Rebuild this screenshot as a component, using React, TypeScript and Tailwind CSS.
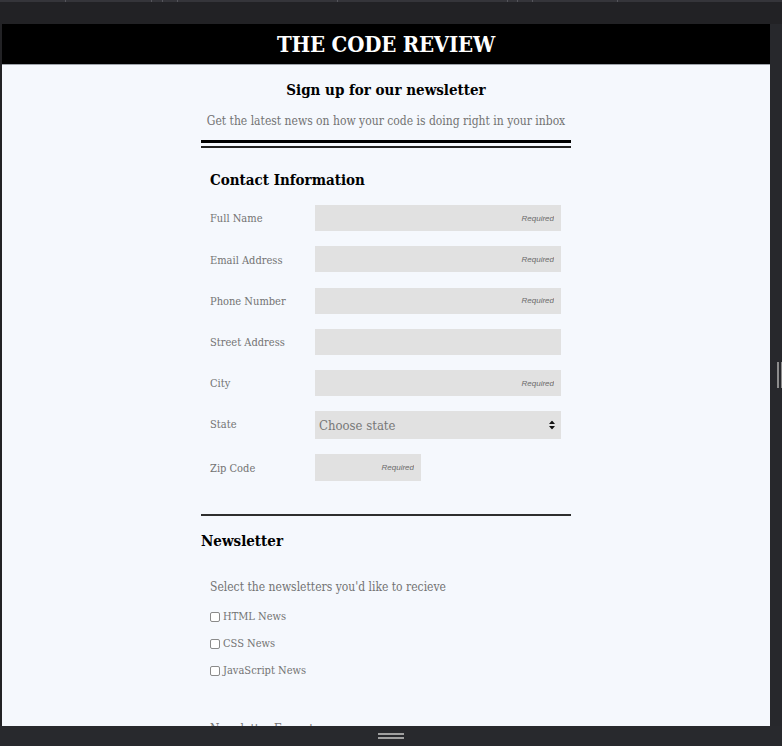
import React from 'react'

const contactFields = [
  { label: 'Full Name', required: true },
  { label: 'Email Address', required: true },
  { label: 'Phone Number', required: true },
  { label: 'Street Address', required: false },
  { label: 'City', required: true },
]

const newsletters = ['HTML News', 'CSS News', 'JavaScript News']

const SortArrows: React.FC = () => (
  <svg width="6" height="9" viewBox="0 0 6 9" className="pointer-events-none absolute right-[6px] top-1/2 -translate-y-1/2">
    <path d="M3 0 L6 3.6 L0 3.6 Z" fill="#111" />
    <path d="M3 9 L6 5.4 L0 5.4 Z" fill="#111" />
  </svg>
)

const App: React.FC = () => {
  return (
    <div className="flex h-[746px] w-[782px] flex-col overflow-hidden bg-[#222225] font-['DejaVu_Serif_Condensed','DejaVu_Serif',serif]">
      {/* window chrome */}
      <div className="h-[24px] shrink-0">
        <div className="flex h-[2px] bg-[#35353a]">
          <div className="w-[66px] border-r border-[#55555b]" />
          <div className="w-[86px] border-r border-[#55555b]" />
          <div className="w-[11px] border-r border-[#55555b]" />
          <div className="w-[15px] border-r border-[#55555b]" />
          <div className="w-[160px] border-r border-[#55555b]" />
          <div className="w-[170px] border-r border-[#55555b]" />
          <div className="w-[10px] border-r border-[#55555b]" />
          <div className="w-[15px] border-r border-[#55555b]" />
          <div className="w-[85px] border-r border-[#55555b]" />
        </div>
      </div>

      <div className="flex min-h-0 flex-1">
        <div className="w-[2px] shrink-0" />

        <main className="min-w-0 flex-1 overflow-hidden bg-[#f5f8fd]">
          <header className="flex h-[41px] items-center justify-center border-b border-[#9ea3aa] bg-black">
            <h1 className="text-[22px] font-bold leading-none tracking-[-0.2px] text-white">THE CODE REVIEW</h1>
          </header>

          <div className="mx-auto w-[370px]">
            <h2 className="mt-[15px] text-center text-[15px] font-bold leading-[20px] text-black">
              Sign up for our newsletter
            </h2>
            <p className="mt-[13px] text-center text-[12px] leading-[16px] text-[#737373]">
              Get the latest news on how your code is doing right in your inbox
            </p>

            <div className="mt-[11px] h-[3px] bg-black" />
            <div className="mt-[3px] h-[2px] bg-[#222]" />

            <section className="px-[9px]">
              <h3 className="mt-[22px] text-[15px] font-bold leading-[20px] text-black">Contact Information</h3>

              <div className="mt-[15px] flex flex-col gap-[15.25px]">
                {contactFields.map((f) => (
                  <div key={f.label} className="flex h-[26px] items-center">
                    <label className="w-[105px] shrink-0 pt-[3px] text-[11px] text-[#737373]">{f.label}</label>
                    <input
                      type="text"
                      placeholder={f.required ? 'Required' : ''}
                      className="h-[26px] w-[246px] bg-[#e1e1e1] pr-[7px] text-right font-['Liberation_Sans',sans-serif] text-[8px] italic outline-none placeholder:text-[#6b6b6b]"
                    />
                  </div>
                ))}
              </div>

              <div className="mt-[15px] flex h-[28px] items-center">
                <label className="w-[105px] shrink-0 pt-[1px] text-[11px] text-[#737373]">State</label>
                <div className="relative h-[28px] w-[246px]">
                  <select className="h-full w-full appearance-none bg-[#e1e1e1] pl-[4px] pt-[1px] text-[13px] text-[#777] outline-none">
                    <option>Choose state</option>
                  </select>
                  <SortArrows />
                </div>
              </div>

              <div className="mt-[15px] flex h-[27px] items-center">
                <label className="w-[105px] shrink-0 pt-[3px] text-[11px] text-[#737373]">Zip Code</label>
                <input
                  type="text"
                  placeholder="Required"
                  className="h-[27px] w-[106px] bg-[#e1e1e1] pr-[7px] text-right font-['Liberation_Sans',sans-serif] text-[8px] italic outline-none placeholder:text-[#6b6b6b]"
                />
              </div>
            </section>

            <div className="mt-[33px] h-[2px] bg-[#2e2e2e]" />

            <section>
              <h3 className="mt-[15px] text-[15px] font-bold leading-[20px] text-black">Newsletter</h3>
              <p className="mt-[28px] pl-[9px] text-[12px] leading-[16px] text-[#737373]">
                Select the newsletters you'd like to recieve
              </p>
              <div className="mt-[14px] flex flex-col gap-[11px] pl-[9px]">
                {newsletters.map((n) => (
                  <label key={n} className="flex h-[16px] items-center gap-[3px] text-[11px] text-[#737373]">
                    <span className="h-[10px] w-[10px] rounded-[2px] border border-[#8a8a8a] bg-white" />
                    {n}
                  </label>
                ))}
              </div>
              <p className="mt-[42px] pl-[9px] text-[12px] leading-[16px] text-[#737373]">Newsletter Format</p>
            </section>
          </div>
        </main>

        <div className="flex w-[12px] shrink-0 items-center justify-end bg-[#27282c]">
          <div className="h-[26px] w-[5px] border-l-2 border-r-[1.5px] border-[#8c8c8c]" />
        </div>
      </div>

      <div className="flex h-[20px] shrink-0 flex-col items-center justify-center gap-[2px] bg-[#28292d]">
        <div className="h-[2px] w-[26px] bg-[#a0a0a0]" />
        <div className="h-[2px] w-[26px] bg-[#a0a0a0]" />
      </div>
    </div>
  )
}

export default App
